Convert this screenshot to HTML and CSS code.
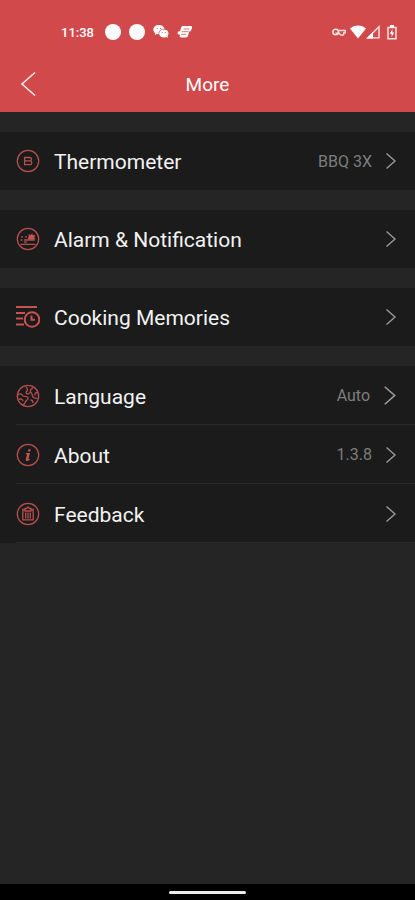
FILE: index.html
```html
<!doctype html>
<html lang="en">
  <head>
    <meta charset="utf-8">
    <meta name="viewport" content="width=device-width, initial-scale=1">
    <title>More</title>
    <link rel="stylesheet" href="styles.css">
  </head>
  <body>
    <header class="header">
      <div class="status-bar">
        <span class="time">11:38</span>
        <span class="dot"></span>
        <span class="dot"></span>
        <svg class="status-chat" width="16" height="14" viewBox="0 0 16 14">
          <path fill="#fff" d="M6 0C2.700 0 .4 2 .4 4.700c0 1.500.7 2.700 1.900 3.500L1.800 10l2.100-1.100 1.700.3C5.400 6 8 3.700 11.500 3.800 11 1.500 8.700 0 6 0z"/>
          <ellipse fill="#fff" cx="10.800" cy="8.400" rx="4.700" ry="4"/>
          <path fill="#fff" d="M12 11l2.600 2-.2-3.500z"/>
          <path stroke="#e39a98" stroke-width=".8" fill="none" d="M5.800 8.500C5.800 6 8 4.200 10.600 4.200"/>
          <g fill="#d1494b"><circle cx="4.200" cy="3.500" r=".6"/><circle cx="7.600" cy="3.300" r=".6"/><circle cx="9.200" cy="7.500" r=".5"/><circle cx="12.300" cy="7.500" r=".5"/></g>
        </svg>
        <svg class="status-app" width="16" height="14" viewBox="0 0 16 14">
          <path fill="#fff" d="M6 1h7.500c1.500 0 1.800 1 1.400 2.200l-.6 1.900c-.4 1.200-1 1.600-2.200 1.600l-.9 3.600c-.4 1.500-1 2.200-2.600 2.200H4.300c-1.400 0-1.900-.8-1.500-2.200L3 9.500H2C.8 9.500.3 8.700.7 7.600c.3-1 1-1.400 2-1.400h.5l.6-2.700C4.200 1.800 4.700 1 6 1z"/>
          <path fill="none" stroke="#d97876" stroke-width="1" d="M6.500 4h5.700M4.500 6.700h7.300M4 9.300h5"/>
        </svg>
        <span class="spacer"></span>
        <svg width="14" height="10" viewBox="0 0 14 10">
          <g fill="none" stroke="#ffe3e1" stroke-width="1.500"><circle cx="3.700" cy="5" r="2.800"/><path d="M6.500 3.500h6.700v2.200h-1.300c0 1.700-.7 2.500-1.900 2.500S7.800 7.400 7.300 6.200H3.500"/></g>
        </svg>
        <svg class="wifi" width="16" height="14" viewBox="0 0 16 14">
          <path fill="#fff" d="M0 3.500C4.500-.4 11.500-.4 16 3.500L8 13.500z"/>
        </svg>
        <svg width="14" height="14" viewBox="0 0 14 14">
          <path fill="none" stroke="#ffe3e1" stroke-width="1.400" d="M1.700 12.900L13 1.700v11.200z"/>
          <path fill="#fff" d="M.4 13.600L7 7v6.600z"/>
        </svg>
        <svg class="battery" width="10" height="15" viewBox="0 0 10 15">
          <path fill="none" stroke="#ffe3e1" stroke-width="1.500" d="M1 2.500h8v11.200H1z"/>
          <path fill="#fff" d="M3 0h4v2.500H3zM5.400 4.300L2.700 8.700h1.900v3.200l2.700-4.400H5.400z"/>
        </svg>
      </div>
      <div class="title-bar">
        <button class="back" type="button" aria-label="Back">
          <svg width="16" height="26" viewBox="0 0 16 26">
            <path fill="none" stroke="#ffe9e7" stroke-width="1.600" d="M15 1.500L2 13l13 11.500"/>
          </svg>
        </button>
        <h1>More</h1>
      </div>
    </header>

    <main class="settings">
      <nav class="group">
        <a class="row" href="#thermometer">
          <svg class="icon" viewBox="0 0 24 24">
            <circle cx="12" cy="12" r="10.700"/>
            <path d="M8.600 8.500h5.200c2.200 0 2.200 3.400 0 3.400H8.600zM8.600 11.900h5.500c2.300 0 2.300 3.700 0 3.700H8.600z"/>
          </svg>
          <span class="label">Thermometer</span>
          <span class="value">BBQ 3X</span>
          <svg class="chevron" viewBox="0 0 12 18"><path d="M1.500 1.500L10 9l-8.500 7.500"/></svg>
        </a>
      </nav>

      <nav class="group">
        <a class="row" href="#alarm">
          <svg class="icon" viewBox="0 0 24 24">
            <circle cx="12" cy="12" r="10.700"/>
            <path d="M4.500 13h2M8 13h10.500M4.500 17.300h15M5 9.800h2M9 9.800h2M8 15.200h3"/>
            <path class="fill" d="M11.500 12.500l1.300-3.500-.3-2 2 1 1.700-1.500.8 1.800 2.300-.3-1 2.200 1 2.300z"/>
          </svg>
          <span class="label">Alarm &amp; Notification</span>
          <svg class="chevron" viewBox="0 0 12 18"><path d="M1.500 1.500L10 9l-8.500 7.500"/></svg>
        </a>
      </nav>

      <nav class="group">
        <a class="row" href="#memories">
          <svg class="icon icon-bold" viewBox="0 0 24 24">
            <path d="M0 2h21M0 8h9M0 13.500h7M0 19.500h8"/>
            <circle cx="16" cy="14.500" r="7.300"/>
            <path d="M15.500 10.500v4.300H19"/>
          </svg>
          <span class="label">Cooking Memories</span>
          <svg class="chevron" viewBox="0 0 12 18"><path d="M1.500 1.500L10 9l-8.500 7.500"/></svg>
        </a>
      </nav>

      <nav class="group">
        <a class="row line" href="#language">
          <svg class="icon" viewBox="0 0 24 24">
            <circle cx="12" cy="12" r="10.700"/>
            <path d="M1.500 11.500c2-2.500 4-2 5.500.5 2 .8 4 0 5 1.500.8 2-1.500 2.500-2.500 4-.5 2-1 3-2.500 3M2.500 15.500c2-1 4-.5 4.500 1.500M10 2.500c0 1.500 2 2 1.500 3.500-.5 1.500-2.500 2-1 3.500 1.500 1 3 0 4-1.500-.5-2 .5-3.500 2.500-4M14.500 8c2 1.500 1.500 4 3 5.500 1.500 1 2.500.5 4 1M21.500 8.500c-2 0-3 1-2.500 3M14.500 16c1.500 0 2.500 1 2.500 3"/>
          </svg>
          <span class="label">Language</span>
          <span class="value">Auto</span>
          <svg class="chevron chevron-large" viewBox="0 0 12 18"><path d="M1.500 1.500L10 9l-8.500 7.500"/></svg>
        </a>
        <a class="row line" href="#about">
          <svg class="icon" viewBox="0 0 24 24">
            <circle cx="12" cy="12" r="10.700"/>
            <path class="fill" d="M12.300 6.200h2.400l-.5 2.200h-2.400zM10 10h4l-1.600 6.300 1.500-.5-.4 1.300c-2 1.400-4.200 1.300-3.700-.8l1.300-5.100H9.700z"/>
          </svg>
          <span class="label">About</span>
          <span class="value">1.3.8</span>
          <svg class="chevron" viewBox="0 0 12 18"><path d="M1.500 1.500L10 9l-8.500 7.500"/></svg>
        </a>
        <a class="row line" href="#feedback">
          <svg class="icon" viewBox="0 0 24 24">
            <circle cx="12" cy="12" r="10.700"/>
            <path d="M9 7.500H6.800v10.300h10.400V7.500H15M9 9V6.500h1.500l1.500-1.500 1.500 1.500H15V9zM9.700 10.500v6M12 10.500v6M14.300 10.500v6"/>
          </svg>
          <span class="label">Feedback</span>
          <svg class="chevron" viewBox="0 0 12 18"><path d="M1.500 1.500L10 9l-8.500 7.500"/></svg>
        </a>
      </nav>
    </main>

    <footer class="home-bar"><span class="home-pill"></span></footer>
  </body>
</html>
```
FILE: styles.css
```css
* {
  box-sizing: border-box;
}
body {
  display: flex;
  flex-direction: column;
  min-height: 100vh;
  margin: 0;
  font-family: Roboto, sans-serif;
  background-color: #252525;
  color: #f2f2f2;
}
.header {
  background-color: #d1494b;
  color: #fff;
}
.status-bar {
  display: flex;
  align-items: center;
  height: 56px;
  padding: 8px 18px 0 61px;
}
.time {
  margin-right: 11px;
  font-size: 13px;
  font-weight: 500;
}
.dot {
  width: 16px;
  height: 16px;
  margin-right: 8px;
  border-radius: 50%;
  background-color: #fff;
}
.status-app {
  margin-left: 8px;
}
.spacer {
  flex: 1;
}
.wifi {
  margin-left: 4px;
}
.battery {
  margin-left: 7px;
}
.title-bar {
  display: grid;
  grid-template-columns: 56px 1fr 56px;
  align-items: center;
  height: 56px;
}
.title-bar h1 {
  margin: 0;
  font-size: 19px;
  font-weight: 400;
  text-align: center;
}
.back {
  display: flex;
  padding: 0 20px;
  border: none;
  background: none;
  cursor: pointer;
}
.settings {
  flex: 1;
}
.group {
  margin-top: 20px;
  background-color: #1b1b1b;
}
.row {
  display: flex;
  align-items: center;
  height: 58px;
  padding: 0 18px 0 16px;
  color: inherit;
  text-decoration: none;
}
/* divider starts level with the icons */
.line {
  height: 59px;
  background: linear-gradient(#292929, #292929) 16px 100% / 100% 1px no-repeat;
}
.icon {
  width: 24px;
  height: 24px;
  margin-right: 14px;
  fill: none;
  stroke: #b64e4e;
  stroke-width: 1.3;
}
.icon-bold {
  stroke: #c65350;
  stroke-width: 2;
}
.icon .fill {
  fill: #c65350;
  stroke: none;
}
.label {
  flex: 1;
  padding-top: 2px;
  font-size: 21px;
}
.value {
  margin-right: 13px;
  font-size: 16px;
  color: #7d7d7d;
}
.chevron {
  width: 12px;
  height: 18px;
  fill: none;
  stroke: #999;
  stroke-width: 1.4;
}
.chevron-large {
  width: 14px;
  height: 21px;
}
.home-bar {
  display: flex;
  justify-content: center;
  align-items: center;
  height: 16px;
  background-color: #000;
}
.home-pill {
  width: 77px;
  height: 3px;
  border-radius: 2px;
  background-color: #ececec;
}
```
